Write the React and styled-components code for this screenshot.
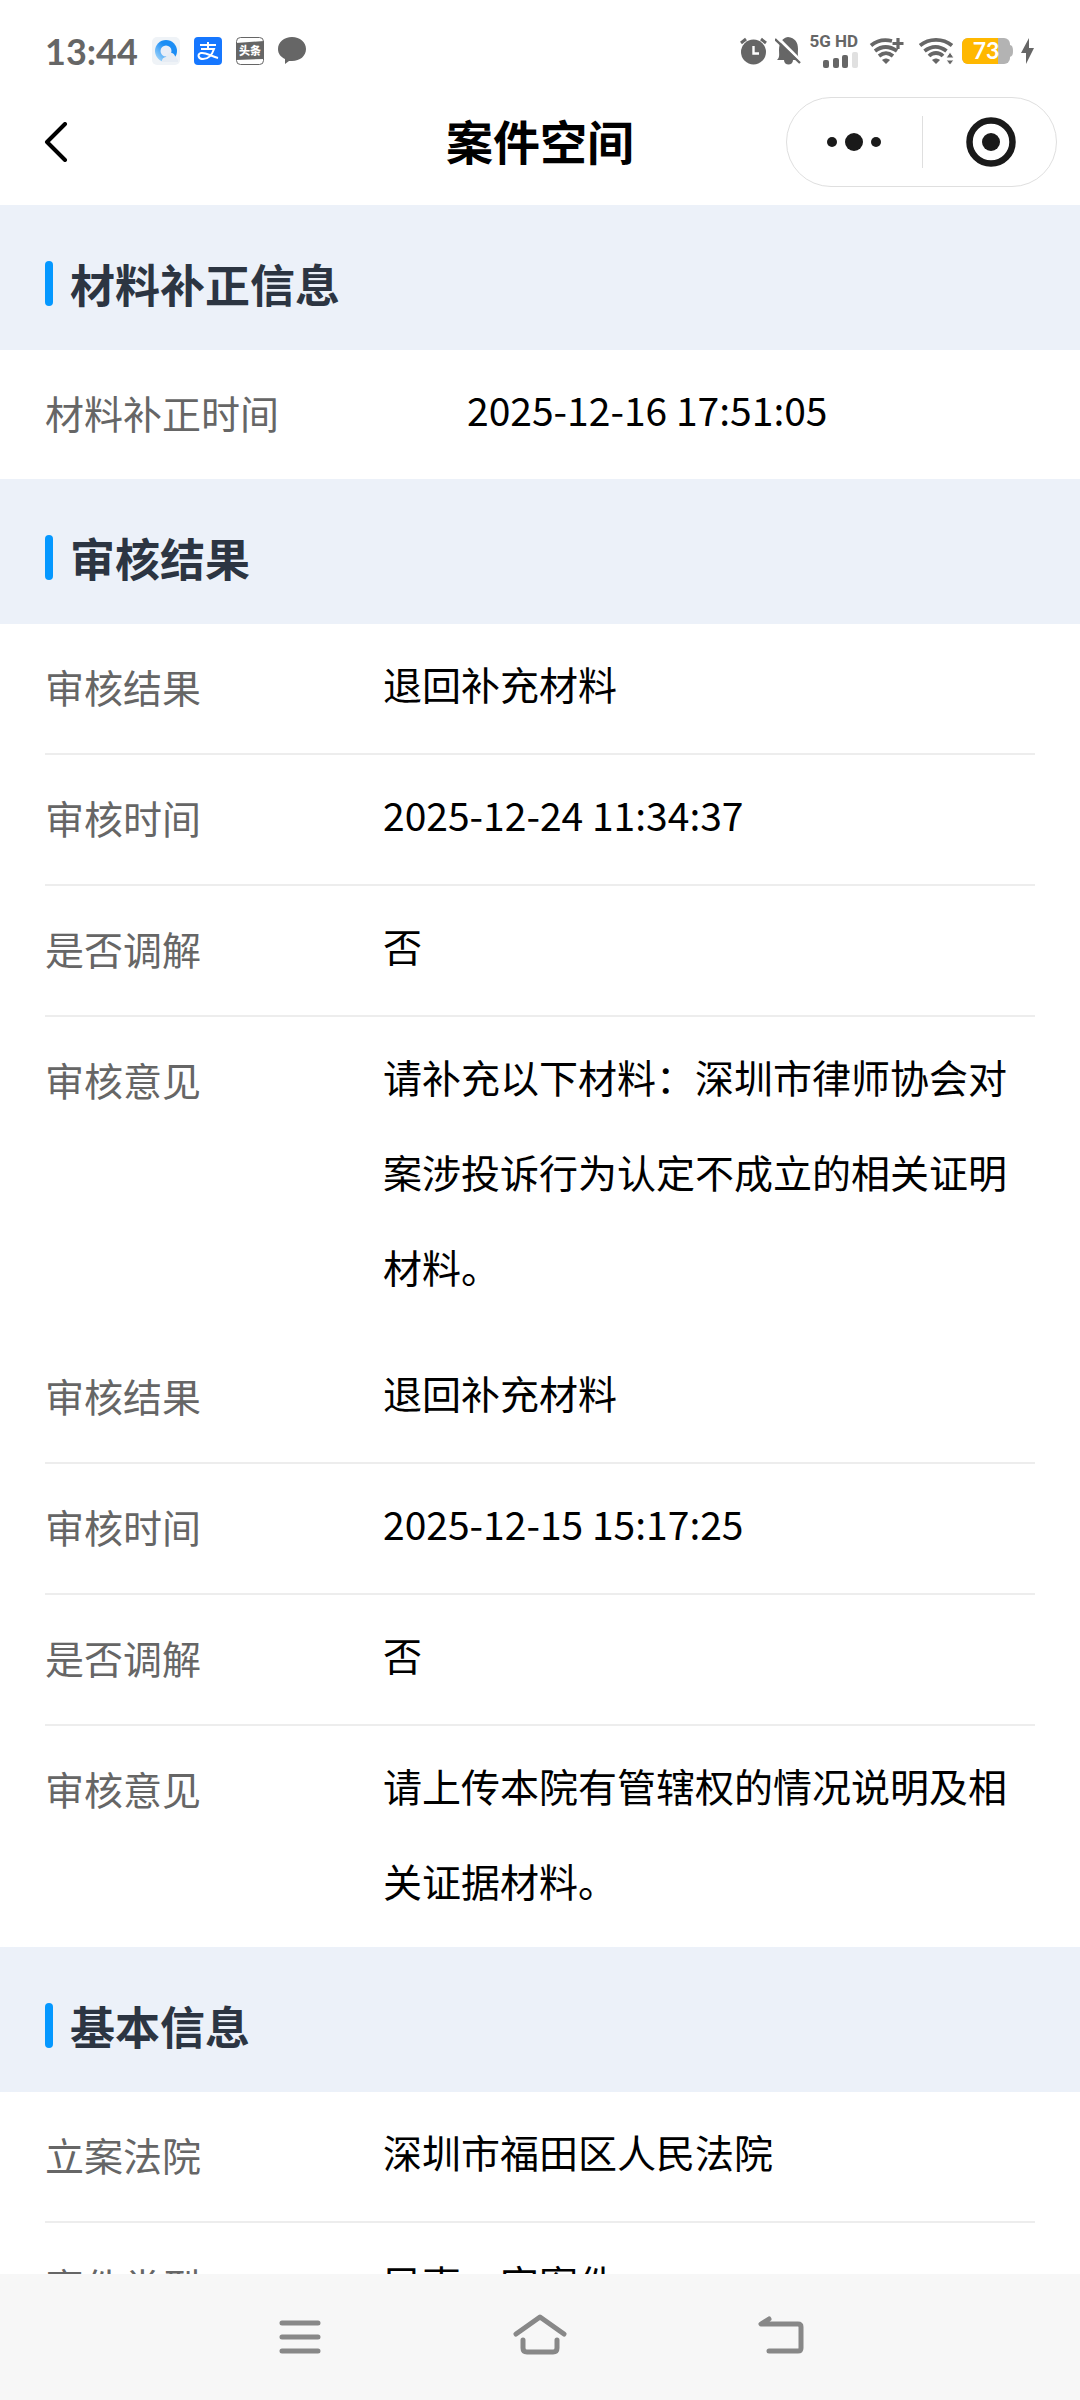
import React from 'react'
import styled, { createGlobalStyle } from 'styled-components'

const GlobalStyle = createGlobalStyle`
  * {
    box-sizing: border-box;
  }

  body {
    margin: 0;
    background: #ffffff;
    font-family: "Noto Sans CJK SC", "Noto Sans", sans-serif;
  }

  button {
    display: flex;
    align-items: center;
    justify-content: center;
    margin: 0;
    padding: 0;
    border: 0;
    background: none;
    font: inherit;
    color: inherit;
  }

  svg {
    display: block;
    flex: none;
  }
`

const Screen = styled.div`
  display: flex;
  flex-direction: column;
  height: 100vh;
  overflow: hidden;
`

const StatusBar = styled.div`
  display: flex;
  flex: none;
  align-items: center;
  justify-content: space-between;
  height: 88px;
  padding: 14px 46px 0 45px;
  color: #666666;
`

const StatusGroup = styled.div`
  display: flex;
  align-items: center;
  gap: ${props => props.$gap}px;
`

const Clock = styled.time`
  font-family: Lato, sans-serif;
  font-size: 36px;
  font-weight: 700;
  line-height: 40px;
`

const Network = styled.div`
  display: flex;
  flex-direction: column;
  align-items: flex-end;
  gap: 4px;
  padding-right: 2px;
  font-family: Roboto, sans-serif;
  font-size: 17px;
  font-weight: 700;
  line-height: 14px;
  white-space: nowrap;
`

const NavBar = styled.header`
  display: grid;
  grid-template-columns: 1fr auto 1fr;
  flex: none;
  align-items: center;
  height: 117px;
  padding: 0 23px 10px;
`

const BackButton = styled.button`
  width: 66px;
  height: 64px;
`

const PageTitle = styled.h1`
  margin: 0;
  padding-bottom: 4px;
  font-size: 47px;
  font-weight: 700;
  line-height: 64px;
  color: #000000;
`

const Capsule = styled.div`
  display: flex;
  justify-self: end;
  width: 271px;
  height: 90px;
  border: 1px solid #dfdfdf;
  border-radius: 45px;
`

const CapsuleButton = styled.button`
  width: 50%;

  & + & {
    position: relative;
    padding-left: 4px;
  }

  & + &::before {
    content: "";
    position: absolute;
    left: 0;
    top: 18px;
    bottom: 18px;
    width: 1px;
    background: #dfdfdf;
  }
`

const Content = styled.main`
  flex: 1;
  min-height: 0;
  overflow: hidden;
`

const SectionHead = styled.div`
  display: flex;
  align-items: center;
  gap: 17px;
  height: 145px;
  padding: 12px 45px 0;
  background: #ecf1f9;
`

const Marker = styled.span`
  width: 8px;
  height: 45px;
  border-radius: 4px;
  background: #0598ff;
`

const SectionTitle = styled.h2`
  margin: 0;
  font-size: 45px;
  font-weight: 700;
  line-height: 60px;
  color: #2c3542;
`

const Records = styled.dl`
  margin: 0;
  padding: 0 45px;
`

const Record = styled.div`
  display: flex;

  &:not(:last-child) {
    border-bottom: 2px solid #ededed;
  }
`

const RecordName = styled.dt`
  flex: none;
  width: ${props => (props.$wide ? 422 : 338)}px;
  padding: 15px 0 19px;
  font-size: 39px;
  line-height: 95px;
  color: #666666;
`

const RecordValue = styled.dd`
  flex: 1;
  margin: 0;
  padding: 12px 0 19px;
  font-size: 39px;
  line-height: 95px;
  color: #000000;
`

const SystemNav = styled.nav`
  display: flex;
  flex: none;
  justify-content: center;
  gap: 160px;
  height: 126px;
  background: #f7f7f7;
`

const SystemButton = styled.button`
  width: 80px;
`

const BrowserIcon = () => (
  <svg width="28" height="28" viewBox="0 0 28 28">
    <defs>
      <linearGradient id="ring" x1="1" y1="0" x2="0" y2="1">
        <stop offset="0.4" stopColor="#1b8df5" />
        <stop offset="1" stopColor="#b9e2fb" />
      </linearGradient>
    </defs>
    <rect width="28" height="28" rx="5" fill="#eff3f7" />
    <circle cx="14" cy="14" r="11" fill="url(#ring)" />
    <circle cx="14" cy="14" r="5.5" fill="#e9eef8" />
    <path d="M10 25a4 4 0 0 1 4-5c1-5 7-6 9-1l3 4v2z" fill="#e6ecf4" />
  </svg>
)

const PayIcon = () => (
  <svg width="28" height="28" viewBox="0 0 28 28" fill="none" stroke="#ffffff" strokeWidth="2">
    <rect width="28" height="28" rx="4" fill="#1677ff" stroke="none" />
    <path d="M6 8h16M14 5v7M7 12h13c-2 6-6 10-11 10-5 0-6-5-2-6 5-1 9 3 17 5" />
  </svg>
)

const NewsIcon = () => (
  <svg width="28" height="28" viewBox="0 0 28 28">
    <rect x="0.5" y="0.5" width="27" height="27" rx="4" fill="#ffffff" stroke="#666666" />
    <path d="M0 6l28-2v18l-28 1z" fill="#666666" />
    <text x="14" y="18" fontSize="11" fontWeight="900" fill="#ffffff" textAnchor="middle">头条</text>
  </svg>
)

const ChatIcon = () => (
  <svg width="28" height="28" viewBox="0 0 28 28" fill="#666666">
    <path d="M14 0c8 0 14 5 14 12s-6 12-14 12c-1 0-2 0-3 0l-4 3v-5C3 20 0 17 0 12 0 5 6 0 14 0z" />
  </svg>
)

const AlarmIcon = () => (
  <svg width="27" height="28" viewBox="0 0 27 28" fill="none" stroke="#666666" strokeWidth="3">
    <circle cx="13.5" cy="15" r="12.5" fill="#666666" stroke="none" />
    <path d="M1 6l5-4M26 6l-5-4" />
    <path d="M13.5 9v7.5h5.5" stroke="#ffffff" strokeWidth="2.4" />
  </svg>
)

const MutedIcon = () => (
  <svg width="26" height="28" viewBox="0 0 26 28">
    <path d="M2 23c3-3 2-6 2-10C4 6 7 1 13 0c7 1 10 5 10 12 0 4-1 7 2 11h-7c0 6-9 6-9 0z" fill="#666666" />
    <path d="M2 0l25 25" stroke="#ffffff" strokeWidth="3" />
    <path d="M0 2l25 24" stroke="#666666" strokeWidth="2.4" />
  </svg>
)

const SignalIcon = () => (
  <svg width="35" height="16" viewBox="0 0 35 16" fill="#666666">
    <rect x="0" y="8" width="6" height="8" rx="2" />
    <rect x="10" y="6" width="6" height="10" rx="2" />
    <rect x="19" y="3" width="6" height="13" rx="2" />
    <rect x="29" y="0" width="6" height="16" rx="2" fill="#e0e0e0" />
  </svg>
)

const WifiPlusIcon = () => (
  <svg width="42" height="28" viewBox="-2 0 42 28" fill="none" stroke="#666666" strokeWidth="3.8">
    <path d="M1 8.500C7 3.500 14 2 22 4" />
    <path d="M5 14c7-5.500 14-5.500 22 0" />
    <path d="M9 19c5-4 9-4 14 0" />
    <path d="M12 23c3-2 5-2 8 0l-4 4z" fill="#666666" stroke="none" />
    <path d="M28 1v11M22.500 6.500h11" strokeWidth="3.200" />
  </svg>
)

const WifiIcon = () => (
  <svg width="36" height="28" viewBox="0 0 36 28" fill="none" stroke="#666666" strokeWidth="3.8">
    <path d="M2 8.500c9-7.500 23-7.500 32 0" />
    <path d="M6.500 14c7-5.500 15-5.500 22 0" />
    <path d="M11 19c4-4 10-4 14 0" />
    <path d="M14 23c3-2 5-2 8 0l-4 4z" fill="#666666" stroke="none" />
    <path d="M32 15l4 6h-8zM32 28l4-5h-8z" fill="#666666" stroke="#ffffff" strokeWidth="1" />
  </svg>
)

const BatteryIcon = () => (
  <svg width="51" height="26" viewBox="0 0 51 26">
    <rect width="48" height="26" rx="6" fill="#b3b3b3" />
    <path d="M48 7c2 0 3 2 3 6s-1 5-3 6z" fill="#b3b3b3" />
    <path d="M6 0h30v26H6a6 6 0 0 1-6-6V6a6 6 0 0 1 6-6z" fill="#ffb800" />
    <text x="24" y="21" fontFamily="Lato, sans-serif" fontSize="23" fontWeight="700" fill="#ffffff" textAnchor="middle">73</text>
  </svg>
)

const BoltIcon = () => (
  <svg width="13" height="26" viewBox="0 0 13 26" fill="#666666">
    <path d="M8 0v10h5L5 26V15H0z" />
  </svg>
)

const sections = [
  {
    title: '材料补正信息',
    wide: true,
    groups: [[['材料补正时间', '2025-12-16 17:51:05']]]
  },
  {
    title: '审核结果',
    groups: [
      [
        ['审核结果', '退回补充材料'],
        ['审核时间', '2025-12-24 11:34:37'],
        ['是否调解', '否'],
        ['审核意见', '请补充以下材料：深圳市律师协会对案涉投诉行为认定不成立的相关证明材料。']
      ],
      [
        ['审核结果', '退回补充材料'],
        ['审核时间', '2025-12-15 15:17:25'],
        ['是否调解', '否'],
        ['审核意见', '请上传本院有管辖权的情况说明及相关证据材料。']
      ]
    ]
  },
  {
    title: '基本信息',
    groups: [
      [
        ['立案法院', '深圳市福田区人民法院'],
        ['案件类型', '民事一审案件']
      ]
    ]
  }
]

export default () => {
  return (
    <Screen>
      <GlobalStyle />
      <StatusBar>
        <StatusGroup $gap={14}>
          <Clock>13:44</Clock>
          <BrowserIcon />
          <PayIcon />
          <NewsIcon />
          <ChatIcon />
        </StatusGroup>
        <StatusGroup $gap={8}>
          <AlarmIcon />
          <MutedIcon />
          <Network>
            5G HD
            <SignalIcon />
          </Network>
          <WifiPlusIcon />
          <WifiIcon />
          <BatteryIcon />
          <BoltIcon />
        </StatusGroup>
      </StatusBar>
      <NavBar>
        <BackButton aria-label="返回">
          <svg width="24" height="40" viewBox="0 0 24 40" fill="none" stroke="#000000" strokeWidth="4" strokeLinecap="round" strokeLinejoin="round">
            <path d="M21 2L3 20l18 18" />
          </svg>
        </BackButton>
        <PageTitle>案件空间</PageTitle>
        <Capsule>
          <CapsuleButton aria-label="更多">
            <svg width="54" height="18" viewBox="0 0 54 18" fill="#1a1a1a">
              <circle cx="5" cy="9" r="5" />
              <circle cx="27" cy="9" r="9" />
              <circle cx="49" cy="9" r="5" />
            </svg>
          </CapsuleButton>
          <CapsuleButton aria-label="关闭">
            <svg width="50" height="50" viewBox="0 0 50 50">
              <circle cx="25" cy="25" r="21.5" fill="none" stroke="#1a1a1a" strokeWidth="6.5" />
              <circle cx="25" cy="25" r="9" fill="#1a1a1a" />
            </svg>
          </CapsuleButton>
        </Capsule>
      </NavBar>
      <Content>
        {sections.map(section => (
          <section key={section.title}>
            <SectionHead>
              <Marker />
              <SectionTitle>{section.title}</SectionTitle>
            </SectionHead>
            {section.groups.map((group, index) => (
              <Records key={index}>
                {group.map(([name, value]) => (
                  <Record key={name}>
                    <RecordName $wide={section.wide}>{name}</RecordName>
                    <RecordValue>{value}</RecordValue>
                  </Record>
                ))}
              </Records>
            ))}
          </section>
        ))}
      </Content>
      <SystemNav>
        <SystemButton aria-label="最近任务">
          <svg width="42" height="36" viewBox="0 0 42 36" stroke="#888888" strokeWidth="5" strokeLinecap="round">
            <path d="M3 4h36M3 18h36M3 32h36" />
          </svg>
        </SystemButton>
        <SystemButton aria-label="主页">
          <svg width="54" height="46" viewBox="0 0 54 46" fill="none" stroke="#888888" strokeWidth="5" strokeLinecap="round" strokeLinejoin="round">
            <path d="M3 20L27 3l24 17" />
            <path d="M10 26v8q0 4 4 4h26q4 0 4-4v-8" />
          </svg>
        </SystemButton>
        <SystemButton aria-label="后退">
          <svg width="48" height="42" viewBox="0 0 48 42" fill="none" stroke="#888888" strokeWidth="5" strokeLinecap="round" strokeLinejoin="round">
            <path d="M13 3L5 8h37q3 0 3 3v21q0 3-3 3H13" />
          </svg>
        </SystemButton>
      </SystemNav>
    </Screen>
  );
};
